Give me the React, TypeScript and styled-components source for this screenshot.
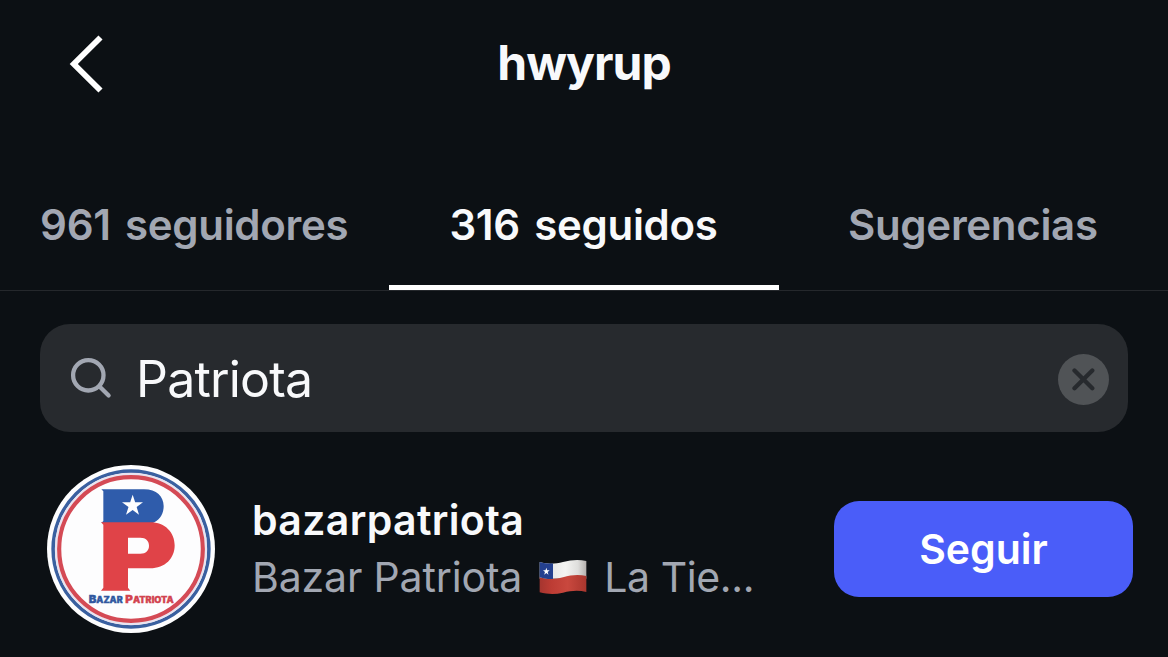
import React, { FC } from 'react';

import styled, { createGlobalStyle } from 'styled-components';

const GlobalStyle = createGlobalStyle`
  * {
    box-sizing: border-box;
  }

  body {
    margin: 0;
    background-color: #0c1014;
    font-family: Inter, "Liberation Sans", sans-serif;
    -webkit-font-smoothing: antialiased;
  }

  p,
  h1 {
    margin: 0;
  }
`;

const tabs = [
  { label: '961 seguidores', active: false },
  { label: '316 seguidos', active: true },
  { label: 'Sugerencias', active: false },
];

const Logo: FC = () => (
  <svg width="168" height="168" viewBox="21 20 504 504">
    <circle cx="273" cy="272" r="252" fill="#fdfdfe" />
    <circle cx="273" cy="272" r="233.500" fill="none" stroke="#3a60a0" strokeWidth="11" />
    <circle cx="273" cy="272" r="225" fill="none" stroke="#e9e4f0" strokeWidth="7" />
    <circle cx="273" cy="272" r="215.500" fill="none" stroke="#d44a55" strokeWidth="12.500" />
    {/* B */}
    <path
      d="M184 93H312C350 93 371 115 371 143C371 169 357 186 338 194H184L190 188V99Z"
      fill="#2f5cab"
    />
    <path
      d="M278 109L285.500 132H309L290 146L297 169L278 155L258 169L265.500 146L246 132H270.500Z"
      fill="#fff"
    />
    {/* P */}
    <path
      d="M183 192H330C377 192 404 224 404 261C404 300 376 330 330 330H264V388L271 397H183L190 388V199ZM264 238V286H301C318 286 327 276 327 262C327 248 318 238 301 238Z"
      fill="#e04348"
      fillRule="evenodd"
    />
    <g fontFamily="Inter, sans-serif" fontWeight="900" fontSize="25" strokeWidth="1">
      <text
        x="146"
        y="433"
        fill="#3158a0"
        stroke="#3158a0"
        textLength="102"
        lengthAdjust="spacingAndGlyphs"
      >
        <tspan fontSize="32">B</tspan>AZAR
      </text>
      <text
        x="256"
        y="433"
        fill="#d2434f"
        stroke="#d2434f"
        textLength="145"
        lengthAdjust="spacingAndGlyphs"
      >
        <tspan fontSize="32">P</tspan>ATRIOTA
      </text>
    </g>
  </svg>
);

const Flag: FC = () => (
  <svg width="48" height="36" viewBox="0 0 144 108">
    <defs>
      <linearGradient id="white" x1="0" x2="1">
        <stop offset="0.3" stopColor="#e9e9e9" />
        <stop offset="0.55" stopColor="#f4f4f2" />
        <stop offset="0.82" stopColor="#dededc" />
        <stop offset="1" stopColor="#b5b0ae" />
      </linearGradient>
      <linearGradient id="red" x1="0" x2="1">
        <stop offset="0" stopColor="#a5352f" />
        <stop offset="0.25" stopColor="#bd3c34" />
        <stop offset="0.6" stopColor="#c9483e" />
        <stop offset="1" stopColor="#a9362e" />
      </linearGradient>
    </defs>
    <path d="M2 9C26 16 48 15 72 9C98 2 120 1 142 6V59H2Z" fill="url(#white)" />
    <path
      d="M2 55C26 62 48 61 72 55C98 47 120 46 142 51V99C120 93 98 94 72 101C48 107 26 106 2 100Z"
      fill="url(#red)"
    />
    <path d="M2 9C16 13 28 14 42 13.500V60C28 61 16 59 2 55Z" fill="#24408f" />
    <path
      d="M22 26L24.500 34H32L26 39L28.500 47L22 42L15.500 47L18 39L12 34H19.500Z"
      fill="#fff"
    />
  </svg>
);

const App: FC = () => {
  return (
    <Screen>
      <GlobalStyle />
      {/* header */}
      <Header>
        <BackButton aria-label="Volver">
          <svg width="34" height="58" viewBox="0 0 34 58" fill="none">
            <path d="M31.500 2.500L4.800 29L31.500 55.500" stroke="#fff" strokeWidth="5.800" />
          </svg>
        </BackButton>
        <Title>hwyrup</Title>
      </Header>
      {/* tabs */}
      <Tabs>
        {tabs.map((tab) => (
          <Tab key={tab.label} $active={tab.active}>
            {tab.label}
          </Tab>
        ))}
      </Tabs>
      {/* search */}
      <SearchBar>
        <svg width="42" height="42" viewBox="0 0 42 42" fill="none">
          <g stroke="#a2a7b2" strokeWidth="4.300">
            <circle cx="18.300" cy="18.300" r="15.200" />
            <path d="M29.500 29.500L38.600 38.500" strokeLinecap="round" />
          </g>
        </svg>
        <Query>Patriota</Query>
        <ClearButton aria-label="Borrar">
          <svg width="23" height="23" viewBox="0 0 23 23" fill="none">
            <path
              d="M2.500 2.500L20.300 20.300M20.300 2.500L2.500 20.300"
              stroke="#272a2e"
              strokeWidth="4.300"
              strokeLinecap="round"
            />
          </svg>
        </ClearButton>
      </SearchBar>
      {/* user */}
      <UserRow>
        <Logo />
        <UserInfo>
          <UserName>bazarpatriota</UserName>
          <FullName>
            <Name>Bazar Patriota</Name>
            <Flag />
            <Excerpt>La Tie...</Excerpt>
          </FullName>
        </UserInfo>
        <FollowButton>Seguir</FollowButton>
      </UserRow>
    </Screen>
  );
};

const Screen = styled.div`
  width: 1168px;
  height: 657px;
  overflow: hidden;
  background-color: #0c1014;
  color: #f8f9fb;
`;

const Header = styled.header`
  height: 126px;
  display: grid;
  grid-template-columns: 200px 1fr 200px;
  align-items: center;
`;

const BackButton = styled.button`
  display: flex;
  padding: 2px 0 0 69px;
  border: 0;
  background: none;
`;

const Title = styled.h1`
  font-size: 48px;
  font-weight: 700;
  line-height: 58px;
  letter-spacing: -1px;
  text-align: center;
`;

const Tabs = styled.nav`
  height: 165px;
  display: grid;
  grid-template-columns: repeat(3, 1fr);
  border-bottom: 1px solid #25282c;
`;

const Tab = styled.div<{ $active: boolean }>`
  display: flex;
  align-items: center;
  justify-content: center;
  padding: 38px 1px 0 0;
  border-bottom: 5px solid ${({ $active }) => ($active ? '#fff' : 'transparent')};
  color: ${({ $active }) => ($active ? '#f8f9fb' : '#a2a7b2')};
  font-size: 42px;
  font-weight: 600;
  letter-spacing: -0.3px;
  word-spacing: 4px;
`;

const SearchBar = styled.div`
  height: 108px;
  display: flex;
  align-items: center;
  margin: 33px 40px 0;
  padding: 0 19px 0 30px;
  border-radius: 30px;
  background-color: #272a2e;
`;

const Query = styled.p`
  flex: 1;
  margin-left: 24px;
  padding-top: 2px;
  font-size: 50px;
  line-height: 60px;
  letter-spacing: -0.8px;
`;

const ClearButton = styled.button`
  width: 51px;
  height: 51px;
  display: flex;
  align-items: center;
  justify-content: center;
  margin-top: 3px;
  padding: 0;
  border: 0;
  border-radius: 50%;
  background-color: #505356;
`;

const UserRow = styled.div`
  display: flex;
  align-items: center;
  padding: 33px 35px 0 47px;
`;

const UserInfo = styled.div`
  flex: 1;
  margin-left: 37px;
  white-space: nowrap;
`;

const UserName = styled.p`
  font-size: 41px;
  font-weight: 600;
  line-height: 57px;
  letter-spacing: 0.35px;
`;

const FullName = styled.div`
  display: flex;
  align-items: center;
  color: #a2a7b2;
  font-size: 41px;
  line-height: 57px;

  svg {
    margin: 0 17px 2px 17px;
  }
`;

const Name = styled.span`
  letter-spacing: -0.15px;
`;

const Excerpt = styled.span`
  letter-spacing: -0.4px;
`;

const FollowButton = styled.button`
  width: 299px;
  height: 96px;
  padding: 0;
  border: 0;
  border-radius: 25px;
  background-color: #4a5df9;
  color: #fff;
  font-family: inherit;
  font-size: 41px;
  font-weight: 600;
`;

export default App;
